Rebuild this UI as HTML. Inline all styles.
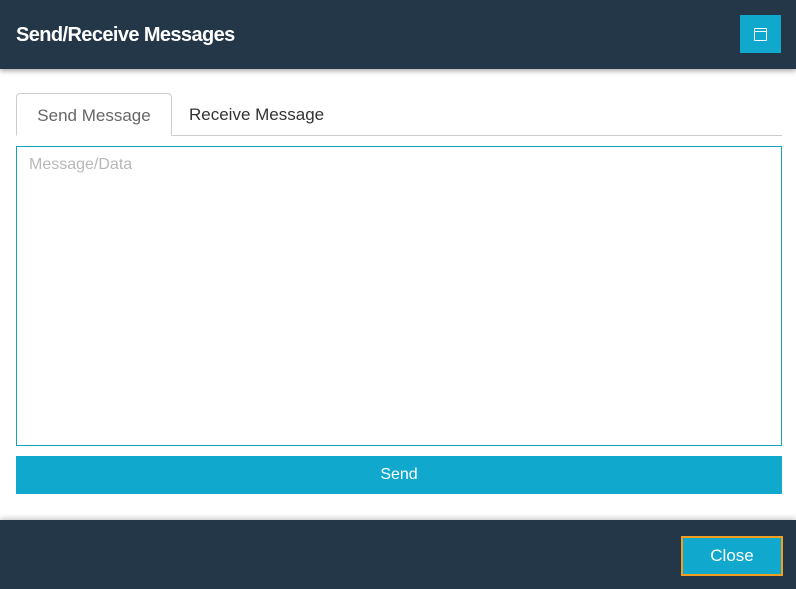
<!DOCTYPE html>
<html><head><style>
body{margin:0;width:796px;height:589px;background:#fff;font-family:"Liberation Sans",sans-serif;position:relative;overflow:hidden}
.hd{position:absolute;left:0;top:0;width:796px;height:69px;background:#243749;box-shadow:0 2px 5px rgba(0,0,0,.35)}
.hd h1{position:absolute;left:16px;top:24px;margin:0;color:#fff;font-size:20px;font-weight:bold;letter-spacing:-0.6px}
.ib{position:absolute;left:740px;top:15px;width:41px;height:38px;background:#10a9cd}
.ib div{position:absolute;left:14px;top:13px;width:13px;height:13px;border:1px solid #fff;border-radius:1px;box-sizing:border-box}
.ib div:after{content:"";position:absolute;left:0;right:0;top:2px;height:1px;background:#fff}
.tabline{position:absolute;left:16px;top:135px;width:766px;height:1px;background:#ccc}
.tab{position:absolute;top:93px;height:43px;font-size:17px;line-height:44px;box-sizing:border-box}
.t1{left:16px;width:156px;border:1px solid #ccc;border-bottom:1px solid #fff;border-radius:4px 4px 0 0;color:#666;text-align:center;background:#fff}
.t2{left:189px;color:#333}
.ta{position:absolute;left:16px;top:146px;width:766px;height:300px;border:1px solid #17a2b8;box-sizing:border-box}
.ta span{position:absolute;left:12px;top:9px;color:#b8b8b8;font-size:16px}
.send{position:absolute;left:16px;top:456px;width:766px;height:38px;background:#10a9cd;color:#fff;text-align:center;line-height:38px;font-size:16px}
.ft{position:absolute;left:0;top:520px;width:796px;height:69px;background:#243749;box-shadow:0 -2px 5px rgba(0,0,0,.2)}
.cl{position:absolute;left:681px;top:16px;width:102px;height:40px;box-sizing:border-box;border:2px solid #f0a01e;background:#10a9cd;color:#fff;text-align:center;line-height:36px;font-size:17px}
</style></head><body>
<div class="hd"><h1>Send/Receive Messages</h1><div class="ib"><div></div></div></div>
<div class="tabline"></div>
<div class="tab t1">Send Message</div>
<div class="tab t2">Receive Message</div>
<div class="ta"><span>Message/Data</span></div>
<div class="send">Send</div>
<div class="ft"><div class="cl">Close</div></div>
</body></html>
